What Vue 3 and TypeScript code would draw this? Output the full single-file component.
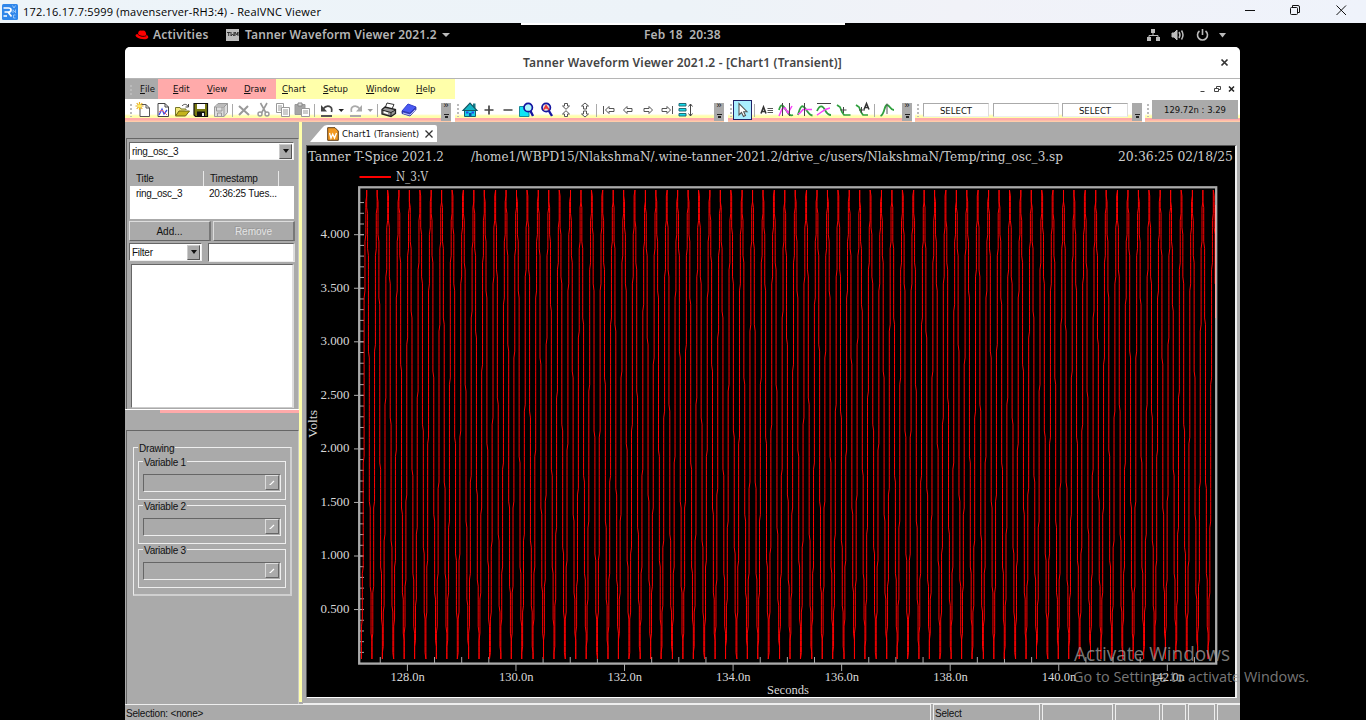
<script setup lang="ts">
interface Shape { d: string; f?: string; s?: string; w?: number }
interface Tool { icon?: string; w: number; sep?: boolean; active?: boolean }

const G = '#999'
const GREEN = '#2fa03e'
const MAG = '#f846f8'

const icons: Record<string, Shape[]> = {
  newFile: [
    { d: 'M5 3.500H11L14.500 7V15.500H5Z', f: '#fff', s: '#555' },
    { d: 'M11 3.500V7H14.500', s: '#555' },
    { d: 'M4.500 1V9M0.500 5H8.500M1.700 2.200L7.300 7.800M7.300 2.200L1.700 7.800', s: '#e8b020', w: 1.2 },
    { d: 'M3 3.500H6V6.500H3Z', f: '#fff060' },
  ],
  newChart: [
    { d: 'M4 2.500H11L14.500 6V15.500H4Z', f: '#fff', s: '#444' },
    { d: 'M11 2.500V6H14.500', s: '#444' },
    { d: 'M5 14L8 8L10 13L13 9', s: '#3a49e8', w: 1.3 },
    { d: 'M5 11L8 9L13 14', s: '#f46070' },
  ],
  open: [
    { d: 'M2.500 14.500V6.500H7L8 8H13V9', f: '#f2e878', s: '#77772a' },
    { d: 'M2.500 15L6 10H16.500L12.500 15Z', f: '#c4b41c', s: '#6c6415' },
    { d: 'M9 5C11 2.500 14 3 15 5.500M15.500 3V6H12.500', s: '#444' },
  ],
  save: [
    { d: 'M2 2.500H15.500V15.500H3.500L2 14Z', f: '#7a7a10', s: '#111', w: 1.2 },
    { d: 'M5 3H13V8H5Z', f: '#fff' },
    { d: 'M5 10.500H13V15.500H5Z', f: '#111' },
    { d: 'M10 12H12V15H10Z', f: '#eee' },
  ],
  saveAll: [
    { d: 'M6 2.500H15.500V11.500L12 15.500H2.500V6Z', f: '#ddd', s: G },
    { d: 'M2.500 6H12V15.500M12 6L15.500 2.500M5 4H14M4.500 6V10H10V6M5.500 15V12H9.500V15', s: G },
  ],
  del: [{ d: 'M4 5L14 14M13 5L4 14', s: '#999', w: 2 }],
  cut: [
    { d: 'M6.500 2L12 12M13 2L7.500 12', s: '#999', w: 1.6 },
    { d: 'M4 13A2 2 0 1 0 8 13A2 2 0 1 0 4 13M11 13A2 2 0 1 0 15 13A2 2 0 1 0 11 13', s: G, w: 1.4 },
  ],
  copy: [
    { d: 'M2.500 2.500H9.500V11.500H2.500Z', f: '#fff', s: G },
    { d: 'M7.500 6.500H15.500V15.500H7.500ZM9 9H14M9 11H14M9 13H14M4 5H8M4 7H7M4 9H7', f: '#fff', s: G },
  ],
  paste: [
    { d: 'M2 3.500H12V13.500H2Z', f: '#a5a5a5', s: '#999' },
    { d: 'M5 2H9V5H5Z', f: '#ddd', s: '#888' },
    { d: 'M8.500 7.500H16.500V15.500H8.500ZM10 10H15M10 12H15', f: '#fff', s: G },
  ],
  undo: [
    { d: 'M3 4V10.500H9Z', f: '#444' },
    { d: 'M5 8C9 3 15 5 13.500 11', s: '#444', w: 1.7 },
    { d: 'M3 15H14', s: '#555', w: 2 },
  ],
  redo: [
    { d: 'M15 4V10.500H9Z', f: '#aaa' },
    { d: 'M13 8C9 3 3 5 4.500 11', s: '#aaa', w: 1.7 },
    { d: 'M3 15H14', s: '#aaa', w: 2 },
  ],
  drop: [{ d: 'M6.500 8H12L9.200 11Z', f: '#222' }],
  dropOff: [{ d: 'M6.500 8H12L9.200 11Z', f: '#999' }],
  print: [
    { d: 'M7 2L14 3.500L12 8L5 7Z', f: '#fff', s: '#333' },
    { d: 'M2 8.500L5 6L15.500 8.500V12.500L11 15.500L2 13Z', f: '#999', s: '#222', w: 1.3 },
    { d: 'M2 9L11 11.500L15.500 9M11 11.500V15', s: '#222' },
    { d: 'M4 11L8 12.500', s: '#fff', w: 1.5 },
  ],
  book: [
    { d: 'M2 10L8 3L16 6L10 12Z', f: '#4a5af4', s: '#3340cc' },
    { d: 'M2 10L10 12.500L16 6.500V8.500L10 15L2 12.500Z', f: '#3443d8', s: '#29309c', w: 0.8 },
    { d: 'M3 12L10 14L15 9', s: '#dfe3ff', w: 0.8 },
  ],
  home: [
    { d: 'M12 2.500H14.500V7H12Z', f: '#167a88' },
    { d: 'M3.500 9H14.500V15.500H3.500Z', f: '#18cfe8', s: '#14606c' },
    { d: 'M2 9.500L9 2L16 9.500Z', f: '#12b4c4', s: '#175562', w: 1.1 },
    { d: 'M5 10.500H7.500V12.500H5ZM10.500 10.500H13V12.500H10.500Z', f: '#2747e8' },
    { d: 'M8 12H10.500V15.500H8Z', f: '#0b4ca0' },
  ],
  plus: [{ d: 'M4.500 9H13.500M9 4.500V13.500', s: '#444', w: 1.7 }],
  minus: [{ d: 'M4.500 9H13.500', s: '#444', w: 1.7 }],
  zoomBox: [
    { d: 'M1.500 5.500H11V15.500H1.500Z', f: '#10e4f4', s: '#178a98' },
    { d: 'M6 6.500A4.200 4.200 0 1 0 14.400 6.500A4.200 4.200 0 1 0 6 6.500', f: '#aef6fb', s: '#1515a0', w: 1.7 },
    { d: 'M12.500 10L15 15', s: '#1515a0', w: 2.4 },
  ],
  zoomFit: [
    { d: 'M4 6.500A4.200 4.200 0 1 0 12.400 6.500A4.200 4.200 0 1 0 4 6.500', f: '#ddd', s: '#1515a0', w: 1.7 },
    { d: 'M5.500 9L8 4.500L11 9M7 7H10', s: '#e33', w: 1.4 },
    { d: 'M11 10L14 15', s: '#1515a0', w: 2.4 },
  ],
  shrinkV: [{ d: 'M7.500 2.500H10.500V5H12.500L9 8.300L5.500 5H7.500ZM7.500 15.500H10.500V13H12.500L9 9.700L5.500 13H7.500Z', f: '#fff', s: '#555' }],
  growV: [{ d: 'M9 2L12.500 5H10.500V8H7.500V5H5.500ZM9 16L12.500 13H10.500V10H7.500V13H5.500Z', f: '#fff', s: '#555' }],
  first: [{ d: 'M4.500 5V13', s: '#555' }, { d: 'M6.500 9L10 5.500V7.500H15V10.500H10V12.500Z', f: '#fff', s: '#555' }],
  left: [{ d: 'M4.500 9L8 5.500V7.500H13V10.500H8V12.500Z', f: '#fff', s: '#555' }],
  right: [{ d: 'M14.500 9L11 5.500V7.500H6V10.500H11V12.500Z', f: '#fff', s: '#555' }],
  last: [{ d: 'M15.500 5V13', s: '#555' }, { d: 'M13.500 9L10 5.500V7.500H5V10.500H10V12.500Z', f: '#fff', s: '#555' }],
  stack: [
    { d: 'M3 2.500H10V5H3ZM3 7.500H10V10H3ZM3 12.500H10V15H3Z', f: '#14dcec', s: '#246a74' },
    { d: 'M14.500 3V15M12.500 5.500L14.500 3L16.500 5.500M12.500 12.500L14.500 15L16.500 12.500', s: '#444' },
  ],
  pointer: [{ d: 'M5 2.500V14L7.500 11.500L9.500 15.500L11.500 14.500L9.700 10.700H13Z', f: '#fff', s: '#555', w: 1.1 }],
  textTool: [
    { d: 'M3 12.500L5.500 6L8 12.500M4 10.500H7', s: '#333', w: 1.6 },
    { d: 'M9.500 7.500H15M9.500 9.500H15M9.500 11.500H15', s: '#555' },
  ],
  curveV2: [
    { d: 'M2 9C4 2 6 4 9 9S13 15 16 14', s: GREEN, w: 1.8 },
    { d: 'M2 15L5 8L8 7L11 12L15 5', s: MAG, w: 1.5 },
    { d: 'M5.500 2V15M12.500 2V15', s: '#444' },
  ],
  curveV: [
    { d: 'M2 14C4 6 6 3 9 7S13 14 16.500 14.500', s: GREEN, w: 1.8 },
    { d: 'M2 13C5 13 6 7 9 8.500H16', s: MAG, w: 1.5 },
    { d: 'M8.500 2V15', s: '#444' },
  ],
  curveH: [
    { d: 'M2 10C5 3 8 5 10 9S14 14 16 14', s: GREEN, w: 1.8 },
    { d: 'M2 14C6 12 8 8 15 7', s: MAG, w: 1.5 },
    { d: 'M2 2.500H16', s: '#444', w: 1.2 },
  ],
  curveP: [{ d: 'M2 4L5 6L7 11L9 14H15.500', s: GREEN, w: 1.7 }, { d: 'M8.500 6V12M5.500 9H11.500', s: '#444' }],
  curveA: [
    { d: 'M2 4L5 6L7 11L9 14H14', s: GREEN, w: 1.7 },
    { d: 'M7.500 6V12M5 9H11', s: '#444' },
    { d: 'M10 8.500L12.500 2.500L15 8.500M11 6.500H14', s: '#333', w: 1.5 },
  ],
  peak: [{ d: 'M2.500 15C7 13 6 4 9 4S12 9 16 9', s: GREEN, w: 1.8 }, { d: 'M9 2.500V13', s: '#555' }],
}

const fileTools: Tool[] = [
  { icon: 'newFile', w: 19 }, { icon: 'newChart', w: 19 }, { icon: 'open', w: 19 }, { icon: 'save', w: 20 }, { icon: 'saveAll', w: 19 },
  { sep: true, w: 4 }, { icon: 'del', w: 19 }, { icon: 'cut', w: 20 }, { icon: 'copy', w: 19 }, { icon: 'paste', w: 19 },
  { sep: true, w: 6 }, { icon: 'undo', w: 19 }, { icon: 'drop', w: 10 }, { icon: 'redo', w: 19 }, { icon: 'dropOff', w: 10 },
  { sep: true, w: 4 }, { icon: 'print', w: 20 }, { icon: 'book', w: 19 },
]
const viewTools: Tool[] = [
  { icon: 'home', w: 19 }, { icon: 'plus', w: 19 }, { icon: 'minus', w: 19 }, { icon: 'zoomBox', w: 20 }, { icon: 'zoomFit', w: 19 },
  { icon: 'shrinkV', w: 19 }, { icon: 'growV', w: 19 }, { sep: true, w: 4 }, { icon: 'first', w: 20 }, { icon: 'left', w: 19 },
  { icon: 'right', w: 19 }, { icon: 'last', w: 19 }, { icon: 'stack', w: 20 },
]
const curveTools: Tool[] = [
  { icon: 'pointer', w: 19, active: true }, { sep: true, w: 5 }, { icon: 'textTool', w: 19 }, { icon: 'curveV2', w: 19 },
  { icon: 'curveV', w: 19 }, { icon: 'curveH', w: 20 }, { icon: 'curveP', w: 19 }, { icon: 'curveA', w: 19 },
  { sep: true, w: 4 }, { icon: 'peak', w: 21 },
]
const toolbars = [
  { id: 'file', tools: fileTools },
  { id: 'view', tools: viewTools },
  { id: 'curve', tools: curveTools },
]
const menus = [
  { k: 'F', r: 'ile', c: 'gray' }, { k: 'E', r: 'dit', c: 'edit' }, { k: 'V', r: 'iew', c: 'view' }, { k: 'D', r: 'raw', c: 'draw' },
  { k: 'C', r: 'hart', c: 'chart' }, { k: 'S', r: 'etup', c: 'setup' }, { k: 'W', r: 'indow', c: 'windows' }, { k: 'H', r: 'elp', c: 'help' },
]
const variables = ['Variable 1', 'Variable 2', 'Variable 3']
const statusCells = [
  { t: 'Selection: <none>', w: 806 }, { t: 'Select', w: 107 }, { t: '', w: 71 }, { t: '', w: 45 }, { t: '', w: 24 }, { t: '', w: 27 }, { t: '', w: 26 },
]

const Y4 = 234.7
const VOLT = 107.1
const yOf = (v: number) => Y4 + (4 - v) * VOLT
const xOf = (n: number) => 407.4 + (n - 128) * 54.28
const yLabels = [4, 3.5, 3, 2.5, 2, 1.5, 1, 0.5]
const yMinor = Array.from({ length: 44 }, (_, i) => (i + 1) / 10).filter(v => v < 4.4)
const xLabels = [128, 130, 132, 134, 136, 138, 140, 142]
const xMinor = Array.from({ length: 32 }, (_, i) => 127.5 + i * 0.5).filter(v => v % 2 !== 0 && v < 142.8)

// One oscillator period as (phase, level) pairs, snapped to device columns.
const period = 10.722
const top = 190
const bottom = 659
const column = 0.871
const profile = [
  [0, 0], [0.03, 0.04], [0.09, 0.1], [0.16, 0.21], [0.21, 0.35], [0.25, 0.5], [0.31, 0.77], [0.36, 0.86], [0.44, 0.95],
  [0.5, 1], [0.56, 0.95], [0.64, 0.86], [0.69, 0.77], [0.75, 0.5], [0.79, 0.35], [0.84, 0.21], [0.91, 0.1], [0.97, 0.04], [1, 0],
]
const snap = (x: number) => 125 + (Math.floor((x - 125) / column) + 0.5) * column
const pts: string[] = []
for (let i = 0; i < 80; i++) {
  for (let j = 0; j < profile.length - 1; j++) {
    const [t0, v0] = profile[j]
    const [t1, v1] = profile[j + 1]
    const steps = Math.max(2, Math.round(Math.abs(v1 - v0) * 70))
    for (let k = 0; k < steps; k++) {
      const f = k / steps
      const x = 361.2 + (i + t0 + (t1 - t0) * f) * period
      const y = bottom - (v0 + (v1 - v0) * f) * (bottom - top)
      if (x < 1215.5) pts.push(`${snap(x).toFixed(2)},${y.toFixed(1)}`)
    }
  }
}
const wave = pts.join(' ')
</script>

<template>
  <div class="screen">
    <header class="vnc-bar">
      <svg class="vnc-logo" width="16" height="16" viewBox="0 0 16 16">
        <rect width="16" height="16" rx="1.500" fill="#2f86ea" />
        <path d="M1.500 4H6.500Q9 4 9 6T6.500 8H5M2.500 8H6L9.500 12.500M1.500 12H5" fill="none" stroke="#fff" stroke-width="1.700" />
        <path d="M10.500 1.500L12 4L13.500 1.500M11 5.500V9M13.500 5.500V9M11 6L13.500 8.500M13.500 11H11.500V14H13.500" fill="none" stroke="#9cc9fa" stroke-width="0.900" />
      </svg>
      <span class="vnc-title">172.16.17.7:5999 (mavenserver-RH3:4) - RealVNC Viewer</span>
      <svg class="win-ctl" width="110" height="23" viewBox="0 0 110 23" fill="none" stroke="#111">
        <path d="M1 10.500H11" />
        <rect x="46.500" y="7.500" width="7" height="7" rx="1" />
        <path d="M48.500 7.500V5.500H54Q55.500 5.500 55.500 7V12.500H53.500" />
        <path d="M92.500 5.500L102 15M102 5.500L92.500 15" />
      </svg>
    </header>

    <div class="gnome">
      <div class="vnc-tab"></div>
      <svg class="hat" width="14" height="10" viewBox="0 0 14 10">
        <path d="M3 5C3 1 4.500 0 7 0.800C10 0 11 2 11.300 5C13 5.500 13.800 6.800 13 8C11.500 10 5 9.500 1.500 7C-0.500 5 0.800 4 3 4.200Z" fill="#f00" />
        <path d="M3 4.500C5 6.500 9 7 11.300 5.700" stroke="#300" fill="none" />
      </svg>
      <span class="act">Activities</span>
      <svg class="tw" width="13" height="12" viewBox="0 0 13 12">
        <rect width="13" height="12" fill="#bbb" />
        <path d="M1 3.500H4.500M2.700 3.500V7M5 3V7L6.500 5L8 7V3M9 7V3L11 6L12 3V7" stroke="#222" fill="none" stroke-width="0.900" />
      </svg>
      <span class="app">Tanner Waveform Viewer 2021.2</span>
      <i class="caret"></i>
      <span class="date">Feb 18&nbsp; 20:38</span>
      <svg class="tray" width="82" height="16" viewBox="0 0 82 16" fill="none" stroke="#bbb">
        <path d="M5 2H9V6H5ZM1 10H5V14H1ZM10 10H14V14H10Z" fill="#bbb" stroke="none" />
        <path d="M7 6V8.500M3 10V8.500H12V10" />
        <path d="M26 6H28L31 3V13L28 10H26Z" fill="#bbb" />
        <path d="M33 5Q35 8 33 11M35.500 3.500Q38.500 8 35.500 12.500" stroke-width="1.500" />
        <path d="M53.500 4A5 5 0 1 0 59.500 4M56.500 2V8" stroke-width="1.600" />
        <path d="M73 6H80L76.500 10.500Z" fill="#bbb" stroke="none" />
      </svg>
    </div>

    <main class="app-window">
      <div class="caption">
        <span>Tanner Waveform Viewer 2021.2 - [Chart1 (Transient)]</span>
        <svg width="9" height="9" viewBox="0 0 9 9"><path d="M1.500 1.500L7.500 7.500M7.500 1.500L1.500 7.500" stroke="#333" stroke-width="1.700" /></svg>
      </div>

      <nav class="menubar">
        <span v-for="m in menus" :key="m.r" class="menu" :class="m.c"><i v-if="m.k === 'F'" class="grip"></i><u>{{ m.k }}</u>{{ m.r }}</span>
        <svg class="mdi" width="38" height="12" viewBox="0 0 38 12" fill="none" stroke="#444">
          <path d="M0.500 8.500H4.500" /><path d="M14.500 5.500H18.500V8.500H14.500ZM16.500 5V3.500H20.500V6.500H19" />
          <path d="M29 3.500L34 8.500M34 3.500L29 8.500" stroke="#222" stroke-width="1.500" />
        </svg>
      </nav>

      <div class="toolbars">
        <div v-for="b in toolbars" :key="b.id" class="toolbar" :class="b.id + '-bar'">
          <i class="grip"></i>
          <span v-for="(t, i) in b.tools" :key="i" class="tool" :class="{ active: t.active }" :style="{ width: t.w + 'px' }">
            <i v-if="t.sep" class="sep"></i>
            <svg v-else width="18" height="18" viewBox="0 0 18 18">
              <path v-for="(p, j) in icons[t.icon!]" :key="j" :d="p.d" :fill="p.f || 'none'" :stroke="p.s || 'none'" :stroke-width="p.w || 1" />
            </svg>
          </span>
          <span class="more"><b>»</b><i></i></span>
        </div>
        <div class="toolbar sel">
          <i class="grip"></i>
          <span class="box">SELECT</span><span class="box"></span><span class="box">SELECT</span>
          <span class="more"><i></i></span>
        </div>
        <div class="toolbar pos"><i class="grip"></i><span class="coords">129.72n : 3.29</span></div>
      </div>

      <div class="body">
        <aside>
          <section class="dock files">
            <div class="combo wide"><span>ring_osc_3</span><b><i></i></b></div>
            <div class="thead"><span>Title</span><span>Timestamp</span></div>
            <div class="tbody"><span>ring_osc_3</span><span>20:36:25 Tues...</span></div>
            <div class="btns"><button>Add...</button><button class="off">Remove</button></div>
            <div class="filter"><div class="combo"><span>Filter</span><b><i></i></b></div><div class="field"></div></div>
            <div class="list"></div>
          </section>
          <div class="split"><i></i></div>
          <section class="dock draw-dock">
            <div class="group">
              <span class="lg">Drawing</span>
              <div v-for="v in variables" :key="v" class="var">
                <span class="lg">{{ v }}</span>
                <div class="dis"><b><svg width="6" height="6" viewBox="0 0 6 6"><path d="M0.500 4.500H1.500L5 1" stroke="#fff" stroke-width="1.200" fill="none" /></svg></b></div>
              </div>
            </div>
          </section>
        </aside>
        <div class="bar-y"></div>

        <section class="doc">
          <div class="tabs">
            <svg width="17" height="17" viewBox="0 0 17 17"><path d="M0 17L12 3Q14 0 17 0V17Z" fill="#fff" /></svg>
            <div class="tab">
              <svg width="12" height="14" viewBox="0 0 12 14"><path d="M0.700 0.700H8L11.300 4V13.300H0.700Z" fill="#f39a22" stroke="#5c3c18" /><path d="M2.500 6L4 11L5.700 7L7.500 11L9.500 6" fill="none" stroke="#fff" stroke-width="1.300" /></svg>
              <span>Chart1 (Transient)</span>
              <svg width="8" height="8" viewBox="0 0 8 8"><path d="M0.500 0.500L7.500 7.500M7.500 0.500L0.500 7.500" stroke="#333" stroke-width="1.300" /></svg>
            </div>
          </div>
          <svg class="plot" width="928" height="551" viewBox="307 146 928 551">
            <rect x="307" y="146" width="928" height="551" fill="#000" />
            <g class="head">
              <text x="308" y="161" textLength="136" lengthAdjust="spacingAndGlyphs">Tanner T-Spice 2021.2</text>
              <text x="471" y="161" textLength="592" lengthAdjust="spacingAndGlyphs">/home1/WBPD15/NlakshmaN/.wine-tanner-2021.2/drive_c/users/NlakshmaN/Temp/ring_osc_3.sp</text>
              <text x="1118" y="161" textLength="115" lengthAdjust="spacingAndGlyphs">20:36:25 02/18/25</text>
              <text x="396" y="180.500" textLength="32" lengthAdjust="spacingAndGlyphs">N_3:V</text>
            </g>
            <path d="M359.500 177H391" stroke="#f00" stroke-width="1.900" />
            <g stroke="#aaa" stroke-width="1">
              <path v-for="v in yMinor" :key="'a' + v" :d="`M360 ${yOf(v)}h4`" />
              <path v-for="v in yLabels" :key="'b' + v" :d="`M354 ${yOf(v)}h10`" />
              <path v-for="n in xMinor" :key="'c' + n" :d="`M${xOf(n)} 657v6`" />
              <path v-for="n in xLabels" :key="'d' + n" :d="`M${xOf(n)} 664v7`" />
            </g>
            <rect x="359.200" y="187.300" width="857" height="476.300" fill="none" stroke="#aaa" stroke-width="2.300" />
            <polyline :points="wave" fill="none" stroke="#f00" stroke-width="1" stroke-linejoin="bevel" />
            <path d="M1215.500 205V318" stroke="#f99" />
            <g class="ticks">
              <text v-for="v in yLabels" :key="v" x="320.500" :y="yOf(v) + 3.300" textLength="29" lengthAdjust="spacingAndGlyphs">{{ v.toFixed(3) }}</text>
              <text v-for="n in xLabels" :key="n" :x="xOf(n) - 17" y="681" textLength="34.500" lengthAdjust="spacingAndGlyphs">{{ n }}.0n</text>
              <text x="767" y="693.500" textLength="42" lengthAdjust="spacingAndGlyphs">Seconds</text>
              <text transform="translate(317 438) rotate(-90)" textLength="28" lengthAdjust="spacingAndGlyphs">Volts</text>
            </g>
          </svg>
        </section>
      </div>

      <footer class="status">
        <span v-for="(c, i) in statusCells" :key="i" :style="{ width: c.w + 'px' }">{{ c.t }}</span>
      </footer>
    </main>

    <svg class="watermark" width="240" height="50" viewBox="0 0 240 50">
      <text x="1" y="21" font-size="19.500" textLength="156" lengthAdjust="spacingAndGlyphs">Activate Windows</text>
      <text x="0" y="42" font-size="14" textLength="236" lengthAdjust="spacingAndGlyphs">Go to Settings to activate Windows.</text>
    </svg>
  </div>
</template>

<style>
body { background: #000; overflow: hidden; }
</style>

<style scoped>
* { box-sizing: border-box; }
.screen { width: 1366px; height: 720px; background: #000; position: relative; overflow: hidden; display: flex; flex-direction: column; font-family: "Liberation Sans", sans-serif; font-size: 10px; color: #111; white-space: nowrap; }
svg { display: block; flex: none; }
.vnc-bar { height: 23px; flex: none; display: flex; align-items: center; background: linear-gradient(90deg, #edf4f9, #edf3f8 50%, #f1f2f8 70%, #eff3fb); padding-left: 2px; font-family: "Open Sans", sans-serif; }
.vnc-title { font-size: 11px; margin-left: 5px; letter-spacing: 0.2px; color: #000; }
.win-ctl { margin-left: auto; margin-right: 12px; }
.gnome { height: 24px; flex: none; display: flex; position: relative; padding: 0 138px 2px 135px; align-items: center; font-family: "Noto Sans", sans-serif; font-weight: 600; font-size: 12px; color: #b4b4b4; }
.vnc-tab { position: absolute; left: 521px; top: 0; width: 324px; height: 2px; background: #fff; }
.hat { margin-top: 2px; }
.act { margin-left: 4px; width: 73px; letter-spacing: 0.2px; }
.tw { width: 13px; margin-top: 1px; }
.app { margin-left: 6px; width: 197px; letter-spacing: 0.14px; }
.caret { border: 4px solid transparent; border-top: 4px solid #bbb; border-bottom: 0; margin-top: 1px; }
.date { margin-left: 194px; letter-spacing: 0.15px; }
.tray { margin-left: auto; margin-top: 1px; }
.app-window { width: 1115px; height: 673px; margin-left: 125px; background: #aaa; border-radius: 5px 5px 0 0; overflow: hidden; display: flex; flex-direction: column; }
.caption { height: 32px; flex: none; background: #fff; border-bottom: 1px solid #b5b5b5; display: flex; align-items: center; padding-right: 11px; font-family: "Noto Sans", sans-serif; font-weight: 600; font-size: 12px; letter-spacing: 0.16px; color: #444; }
.caption span { margin-left: 398px; margin-top: -1px; }
.caption svg { margin-left: auto; }
.menubar { height: 20px; flex: none; display: flex; background: #fff; font-family: "DejaVu Sans Condensed", "DejaVu Sans", sans-serif; font-stretch: condensed; font-size: 9.5px; }
.menu { line-height: 20px; height: 20px; }
.gray { width: 33px; background: #aaa; display: flex; padding-left: 5px; }
.gray .grip { margin: 6px 8px 0 0; height: 10px; }
.edit, .view, .draw { background: #faa; }
.edit { width: 44px; padding-left: 15px; }
.view { width: 36px; padding-left: 5px; }
.draw { width: 38px; padding-left: 6px; }
.chart, .setup, .windows, .help { background: #ffa; }
.chart { width: 42px; padding-left: 6px; }
.setup { width: 42px; padding-left: 5px; }
.windows { width: 50px; padding-left: 6px; }
.help { width: 45px; padding-left: 6px; }
.mdi { margin-left: auto; margin-top: 4px; margin-right: 2px; }
.grip { width: 2px; height: 13px; flex: none; background: repeating-linear-gradient(#bbb 0 2px, transparent 2px 4px); }
.toolbars { height: 23px; flex: none; display: flex; background: #fff; }
.toolbar { height: 23px; display: flex; padding-top: 2px; margin-right: 3px; background: linear-gradient(#fff 15px, #fffdd0 16px, #ffa 17px, #ffa 19px, #faa 19px, #faa 21px, #fca 22px, #fca 23px); }
.toolbar .grip { margin: 3px 3px 0 5px; }
.file-bar { width: 326px; margin-right: 4px; }
.file-bar .grip { margin-right: 2px; }
.view-bar { width: 269px; margin-right: 4px; }
.view-bar .grip { margin: 3px 1px 0 2px; }
.curve-bar { width: 184px; }
.curve-bar .grip { margin: 3px 1px 0 2px; }
.tool { display: flex; justify-content: center; flex: none; height: 18px; }
.tool.active { background: #aef; border: 1px solid #226; height: 20px; margin-top: -1px; }
.sep { width: 1px; height: 13px; margin-top: 3px; background: #aaa; }
.more { width: 10px; height: 18px; margin-top: 2px; background: #aaa; margin-left: auto; display: flex; flex-direction: column; align-items: center; font-size: 9px; line-height: 5px; }
.more b { height: 8px; line-height: 5px; font-weight: 400; }
.more i { margin-top: auto; margin-bottom: 3px; width: 5px; border-top: 1px solid #222; height: 4px; background: linear-gradient(#222, #222) center 1px / 3px 2px no-repeat; }
.sel { width: 227px; }
.sel .grip { margin: 3px 4px 0 2px; }
.box { width: 66px; height: 14px; margin: 2px 3.5px 0 0; border: 1px solid #aaa; border-right-color: #ddd; border-bottom-color: #eee; background: #fff; font: 9.5px/13px "DejaVu Sans Condensed", "DejaVu Sans", sans-serif; text-align: center; }
.pos { margin-right: 0; flex: 1; }
.pos .grip { margin: 3px 3px 0 2px; }
.coords { width: 86px; height: 19px; margin-top: -1px; background: #aaa; font: 9.4px/20px "DejaVu Sans Condensed", "DejaVu Sans", sans-serif; text-align: center; }
.body { height: 582px; flex: none; display: flex; }
aside { width: 174px; display: flex; flex-direction: column; padding-top: 16px; }
.dock { border-left: 1px solid #666; border-top: 1px solid #666; border-right: 1px solid #c8c8c8; margin-left: 1px; }
.files { height: 271px; padding: 3px 3px 0 2px; }
.combo { width: 73px; height: 18px; background: #fff; border: 1px solid #666; border-right: 1px solid #eee; border-bottom-color: #eee; display: flex; align-items: center; padding-left: 2px; letter-spacing: -0.25px; }
.combo.wide { width: 165px; }
.combo b { margin-left: auto; margin-right: 1px; width: 13px; height: 15px; background: #aaa; border: 1px solid #ccc; border-right-color: #555; border-bottom-color: #555; display: flex; align-items: center; justify-content: center; }
.combo b i { border: 3.5px solid transparent; border-top: 4px solid #111; border-bottom: 0; }
.thead { height: 26px; padding-top: 11px; display: flex; line-height: 15px; }
.thead span { width: 75px; border-right: 1px solid #e8e8e8; padding-left: 6px; letter-spacing: -0.15px; }
.thead span:first-child { padding-left: 7px; }
.tbody { height: 33px; background: #fff; margin: 0 1px; display: flex; line-height: 15px; padding-left: 6px; letter-spacing: -0.25px; }
.tbody span { width: 73px; }
.btns { display: flex; gap: 2px; margin-top: 2px; }
.btns button { width: 82px; height: 20px; padding: 0; background: #aaa; border: 1px solid #ddd; border-right: 2px solid #777; border-bottom: 1px solid #666; font: 10px "Liberation Sans", sans-serif; color: #111; }
.btns .off { color: #e4e4e4; text-shadow: -1px -1px #999; }
.filter { display: flex; margin-top: 2px; }
.field { margin-left: 6px; width: 87px; height: 19px; background: #fff; border: 1px solid #666; border-right: 2px solid #ddd; border-bottom-color: #eee; }
.list { margin: 2px 0 0 2px; width: 163px; height: 144px; background: #fff; border: 1px solid #666; border-right: 2px solid #ddd; border-bottom-color: #ccc; }
.split { height: 21px; border-top: 1px solid #fff; }
.split i { display: block; margin-left: 35px; height: 3px; background: #faa; }
.draw-dock { flex: 1; padding: 16px 6px 0 6px; }
.group { width: 159px; height: 149px; border: 1px solid #eee; border-right: 2px solid #d0d0d0; border-bottom: 2px solid #d0d0d0; padding: 0 4px; }
.lg { display: block; width: max-content; background: #aaa; line-height: 11px; height: 10px; margin-top: -5px; padding: 0 1px; }
.group > .lg { margin-bottom: 8px; letter-spacing: -0.2px; }
.var { width: 148px; height: 39px; border: 1px solid #eee; padding: 0 4px; margin-bottom: 5px; letter-spacing: -0.25px; }
.dis { margin-top: 7px; width: 138px; height: 18px; border: 1px solid #666; border-right: 1px solid #eee; border-bottom: 1px solid #eee; display: flex; justify-content: flex-end; padding-right: 1px; }
.dis b { width: 14px; height: 15px; border: 1px solid #ddd; border-right-color: #666; border-bottom-color: #666; display: flex; align-items: center; justify-content: center; }
.bar-y { width: 3px; height: 580px; background: #ffa; margin-right: 1px; }
.doc { flex: 1; padding: 3px 0 0 3px; border-bottom: 1px solid #eee; height: 582px; }
.tabs { height: 20px; display: flex; padding-left: 4px; border-bottom: 3px solid #aaa; }
.tab { width: 110px; height: 17px; background: #fff; display: flex; align-items: center; font: 9.5px "DejaVu Sans Condensed", "DejaVu Sans", sans-serif; border-radius: 0 2px 0 0; }
.tab span { margin: 0 6px 0 3px; }
.plot { border: 1px solid #555; border-right: 2px solid #eee; border-bottom: 1px solid #fff; box-sizing: content-box; }
.head { font-family: "DejaVu Serif Condensed", "DejaVu Serif", serif; font-size: 13px; fill: #ccc; }
.ticks { font-family: "Liberation Serif", serif; font-size: 13px; fill: #d8d8d8; }
.status { flex: 1; display: flex; gap: 2px; letter-spacing: -0.2px; }
.status span { flex: none; border: 1px solid #eee; line-height: 17px; padding-left: 1px; height: 18px; }
.status span:first-child { border-left: 0; }
.watermark { position: absolute; left: 1073px; top: 640px; font-family: "Open Sans", sans-serif; fill: rgba(160, 160, 160, 0.75); }
</style>
